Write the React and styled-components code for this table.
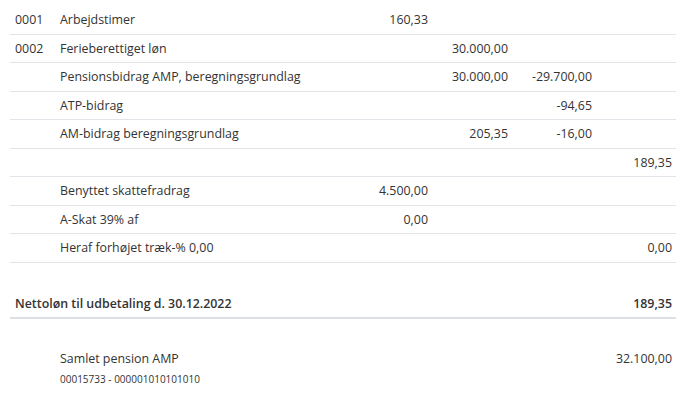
import React from "react";
import styled, { createGlobalStyle } from "styled-components";

const GlobalStyle = createGlobalStyle`
  html, body {
    margin: 0;
    padding: 0;
    background: #ffffff;
  }
  body {
    font-family: "Open Sans", "Liberation Sans", sans-serif;
    color: #333333;
    font-size: 12.4px;
  }
`;

const Wrapper = styled.div`
  padding: 6px 18px 0 10px;
  width: 666px;
`;

const Row = styled.div`
  display: grid;
  grid-template-columns: 45px 297px 80px 80px 84px 80px;
  align-items: center;
  height: 27.5px;
  border-bottom: 1px solid #e3e3ea;
`;

const Cell = styled.div`
  padding: ${(p) => (p.$num ? "0 4px 0 0" : "0 0 0 5px")};
  text-align: ${(p) => (p.$num ? "right" : "left")};
  white-space: nowrap;
`;

const Code = styled(Cell)`
  padding-left: 5px;
`;

const NetRow = styled.div`
  display: flex;
  justify-content: space-between;
  align-items: center;
  margin-top: 26.5px;
  height: 28px;
  padding: 0 4px 0 5px;
  border-bottom: 2px solid #dce0e6;
  font-weight: 600;
`;

const Pension = styled.div`
  display: grid;
  grid-template-columns: 1fr auto;
  margin-top: 31px;
  padding: 0 4px 0 50px;
`;

const PensionLabel = styled.div`
  line-height: 18px;
`;

const PensionSub = styled.div`
  font-size: 10px;
  line-height: 14px;
  margin-top: 4px;
`;

const PensionValue = styled.div`
  line-height: 18px;
  text-align: right;
`;

const rows = [
  { code: "0001", label: "Arbejdstimer", v: ["160,33", "", "", ""] },
  { code: "0002", label: "Ferieberettiget løn", v: ["", "30.000,00", "", ""] },
  { code: "", label: "Pensionsbidrag AMP, beregningsgrundlag", v: ["", "30.000,00", "-29.700,00", ""] },
  { code: "", label: "ATP-bidrag", v: ["", "", "-94,65", ""] },
  { code: "", label: "AM-bidrag beregningsgrundlag", v: ["", "205,35", "-16,00", ""] },
  { code: "", label: "", v: ["", "", "", "189,35"] },
  { code: "", label: "Benyttet skattefradrag", v: ["4.500,00", "", "", ""] },
  { code: "", label: "A-Skat 39% af", v: ["0,00", "", "", ""] },
  { code: "", label: "Heraf forhøjet træk-% 0,00", v: ["", "", "", "0,00"] },
];

const App = () => {
  return (
    <Wrapper>
      <GlobalStyle />
      {rows.map((r, i) => (
        <Row key={i}>
          <Code>{r.code}</Code>
          <Cell>{r.label}</Cell>
          {r.v.map((val, j) => (
            <Cell $num key={j}>
              {val}
            </Cell>
          ))}
        </Row>
      ))}
      <NetRow>
        <span>Nettoløn til udbetaling d. 30.12.2022</span>
        <span>189,35</span>
      </NetRow>
      <Pension>
        <div>
          <PensionLabel>Samlet pension AMP</PensionLabel>
          <PensionSub>00015733 - 000001010101010</PensionSub>
        </div>
        <PensionValue>32.100,00</PensionValue>
      </Pension>
    </Wrapper>
  );
};

export default App;
